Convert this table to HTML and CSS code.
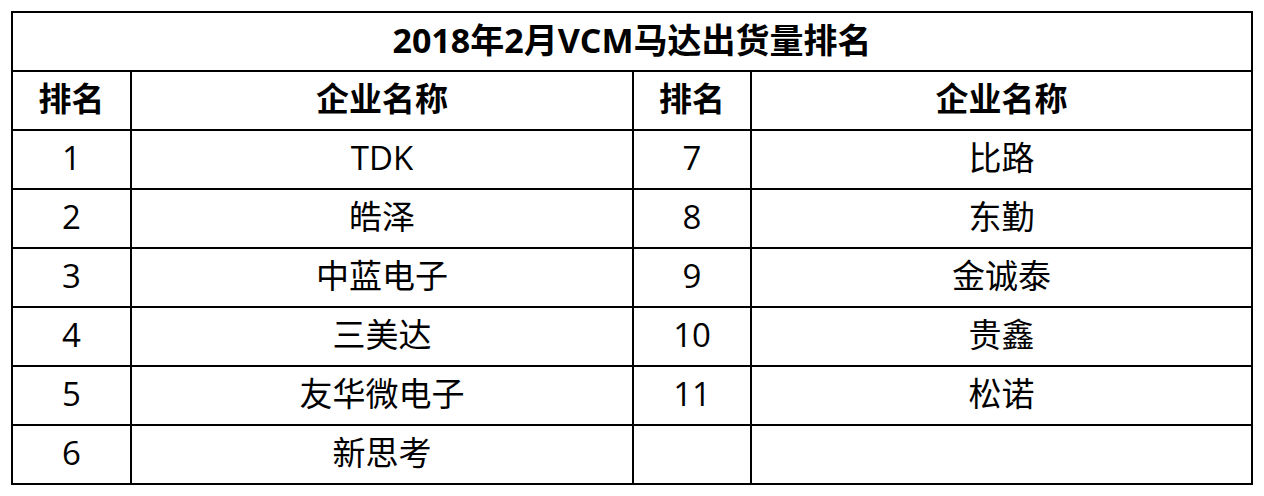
FILE: index.html
```html
<!DOCTYPE html>
<html lang="zh-CN">
<head>
<meta charset="utf-8">
<title>2018年2月VCM马达出货量排名</title>
<link rel="stylesheet" href="styles.css">
</head>
<body>
<div class="sheet">
  <div class="cell title">2018年2月VCM马达出货量排名</div>
  <div class="cell head">排名</div>
  <div class="cell head">企业名称</div>
  <div class="cell head">排名</div>
  <div class="cell head">企业名称</div>

  <div class="cell">1</div><div class="cell">TDK</div><div class="cell">7</div><div class="cell">比路</div>
  <div class="cell">2</div><div class="cell">皓泽</div><div class="cell">8</div><div class="cell">东勤</div>
  <div class="cell">3</div><div class="cell">中蓝电子</div><div class="cell">9</div><div class="cell">金诚泰</div>
  <div class="cell">4</div><div class="cell">三美达</div><div class="cell">10</div><div class="cell">贵鑫</div>
  <div class="cell">5</div><div class="cell">友华微电子</div><div class="cell">11</div><div class="cell">松诺</div>
  <div class="cell">6</div><div class="cell">新思考</div><div class="cell"></div><div class="cell"></div>
</div>
</body>
</html>
```
FILE: styles.css
```css
html, body {
  margin: 0;
  padding: 0;
  background: #ffffff;
}

body {
  padding: 11px 0 0 11px;
  font-family: "Open Sans", "Noto Sans CJK SC", sans-serif;
  color: #000000;
}

.sheet {
  display: grid;
  grid-template-columns: 117px 500px 116px 499px;
  grid-auto-rows: 57px;
  gap: 2px;
  padding: 2px;
  width: max-content;
  background: #000000;
}

.cell {
  background: #ffffff;
  display: flex;
  align-items: center;
  justify-content: center;
  font-size: 33px;
  line-height: 1;
  padding-bottom: 4px;
  box-sizing: border-box;
}

.title {
  grid-column: 1 / -1;
  font-weight: 700;
  font-size: 34px;
}

.head {
  font-weight: 700;
}
```
